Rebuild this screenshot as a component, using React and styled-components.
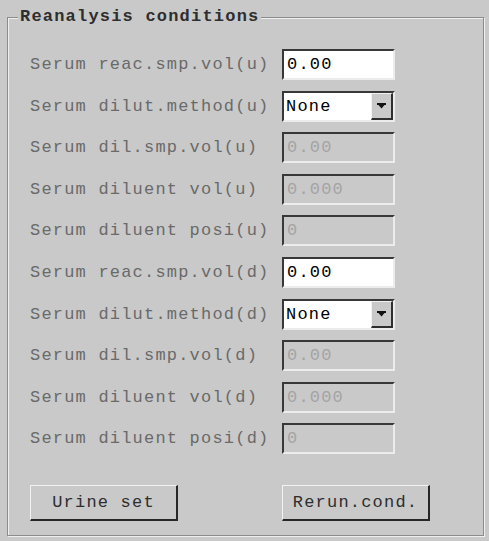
import React from 'react'
import styled, { createGlobalStyle } from 'styled-components'

const GlobalStyle = createGlobalStyle`
html, body {
  margin: 0;
  padding: 0;
  background: #c9c9c9;
}
body {
  width: 489px;
  height: 541px;
  overflow: hidden;
  font-family: "Liberation Mono", "DejaVu Sans Mono", monospace;
}
`

const mono = `
font-family: "Liberation Mono", "DejaVu Sans Mono", monospace;
font-size: 17px;
letter-spacing: 1.2px;
`

const Panel = styled.fieldset`
margin: 7px 5px 5px 7px;
padding: 22px 10px 14px 22px;
border: 1px solid #8c8c8c;
box-shadow: inset 1px 1px 0 #efefef, 1px 1px 0 #efefef;
min-width: 0;
`

const Title = styled.legend`
${mono}
margin-left: -12px;
padding: 0 2px;
line-height: 20px;
font-weight: bold;
color: #2e2e2e;
background: #c9c9c9;
`

const Form = styled.div`
display: grid;
grid-template-columns: 252px 113px;
grid-auto-rows: 31px;
row-gap: 10.6px;
align-items: center;
`

const Label = styled.span`
${mono}
color: #6a6a6a;
white-space: nowrap;
`

const Field = styled.input`
${mono}
box-sizing: border-box;
width: 113px;
height: 31px;
margin: 0;
padding: 0 0 0 3px;
border-style: solid;
border-width: 2px;
border-color: #383838 #ececec #ececec #383838;
border-radius: 0;
outline: none;
background: ${(p) => (p.disabled ? '#c9c9c9' : '#ffffff')};
color: ${(p) => (p.disabled ? '#a4a4a4' : '#000000')};
-webkit-text-fill-color: ${(p) => (p.disabled ? '#a4a4a4' : '#000000')};
opacity: 1;
`

const Combo = styled.div`
box-sizing: border-box;
width: 113px;
height: 31px;
display: flex;
align-items: stretch;
border-style: solid;
border-width: 2px;
border-color: #383838 #ececec #ececec #383838;
background: #ffffff;
`

const ComboText = styled.span`
${mono}
flex: 1;
display: flex;
align-items: center;
padding-left: 2px;
color: #000;
`

const ArrowButton = styled.span`
box-sizing: border-box;
width: 22px;
display: flex;
align-items: center;
justify-content: center;
background: #c9c9c9;
border-style: solid;
border-width: 1px 2px 2px 1px;
border-color: #f2f2f2 #2e2e2e #2e2e2e #f2f2f2;
`

const Buttons = styled.div`
display: flex;
gap: 104px;
margin-top: 31px;
`

const Button = styled.button`
${mono}
box-sizing: border-box;
width: 148px;
height: 36px;
margin: 0;
padding: 0;
background: #c9c9c9;
color: #2e2e2e;
border-style: solid;
border-width: 1px 2px 2px 1px;
border-color: #f2f2f2 #262626 #262626 #f2f2f2;
border-radius: 0;
`

function Arrow() {
  return (
    <svg width="9" height="6" viewBox="0 0 9 6">
      <rect x="0" y="0" width="9" height="2" fill="#111" />
      <polygon points="1.5,2 7.5,2 4.5,5.5" fill="#111" />
    </svg>
  )
}

const rows = [
  { label: 'Serum reac.smp.vol(u)', value: '0.00' },
  { label: 'Serum dilut.method(u)', combo: 'None' },
  { label: 'Serum dil.smp.vol(u)', value: '0.00', disabled: true },
  { label: 'Serum diluent vol(u)', value: '0.000', disabled: true },
  { label: 'Serum diluent posi(u)', value: '0', disabled: true },
  { label: 'Serum reac.smp.vol(d)', value: '0.00' },
  { label: 'Serum dilut.method(d)', combo: 'None' },
  { label: 'Serum dil.smp.vol(d)', value: '0.00', disabled: true },
  { label: 'Serum diluent vol(d)', value: '0.000', disabled: true },
  { label: 'Serum diluent posi(d)', value: '0', disabled: true }
]

function App() {
  return (
    <>
      <GlobalStyle />
      <Panel>
        <Title>Reanalysis conditions</Title>
        <Form>
          {rows.map((row) => (
            <React.Fragment key={row.label}>
              <Label>{row.label}</Label>
              {row.combo ? (
                <Combo>
                  <ComboText>{row.combo}</ComboText>
                  <ArrowButton><Arrow /></ArrowButton>
                </Combo>
              ) : (
                <Field defaultValue={row.value} disabled={row.disabled} readOnly />
              )}
            </React.Fragment>
          ))}
        </Form>
        <Buttons>
          <Button>Urine set</Button>
          <Button>Rerun.cond.</Button>
        </Buttons>
      </Panel>
    </>
  )
}

export default App
